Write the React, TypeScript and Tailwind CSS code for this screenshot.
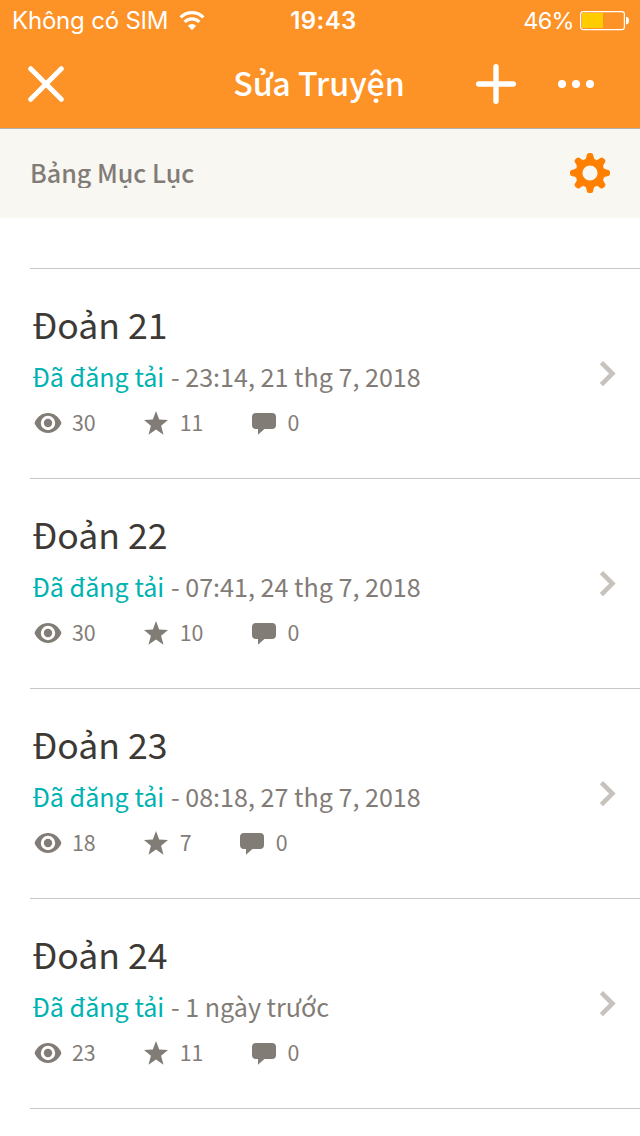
import React from 'react';

interface Chapter {
  title: string;
  date: string;
  views: number;
  votes: number;
  comments: number;
}

const chapters: Chapter[] = [
  { title: 'Đoản 21', date: '23:14, 21 thg 7, 2018', views: 30, votes: 11, comments: 0 },
  { title: 'Đoản 22', date: '07:41, 24 thg 7, 2018', views: 30, votes: 10, comments: 0 },
  { title: 'Đoản 23', date: '08:18, 27 thg 7, 2018', views: 18, votes: 7, comments: 0 },
  { title: 'Đoản 24', date: '1 ngày trước', views: 23, votes: 11, comments: 0 },
];

const WifiIcon = () => (
  <svg width="26" height="20" viewBox="0 0 26 20" fill="none" stroke="white" strokeWidth="3.2">
    <path d="M1.6 6.4a16.2 16.2 0 0 1 22.8 0" />
    <path d="M5.6 10.9a10.4 10.4 0 0 1 14.8 0" />
    <path d="M13 19.2l-4.1-4.4a5.8 5.8 0 0 1 8.2 0z" fill="white" stroke="none" />
  </svg>
);

const BatteryIcon = () => (
  <svg width="49" height="20" viewBox="0 0 49 20">
    <rect x="0.6" y="0.6" width="43.8" height="18" rx="2.6" fill="none" stroke="white" strokeWidth="1.2" />
    <rect x="2" y="2" width="21" height="15" rx="0.8" fill="#ffcc00" />
    <path d="M46 6h0.6a2.4 3.6 0 0 1 0 7.2H46z" fill="white" />
  </svg>
);

const CloseIcon = () => (
  <svg width="36" height="36" viewBox="0 0 36 36" stroke="white" strokeWidth="5" strokeLinecap="round">
    <path d="M2.7 2.7l30.6 30.6M33.3 2.7L2.7 33.3" />
  </svg>
);

const PlusIcon = () => (
  <svg width="40" height="40" viewBox="0 0 40 40" stroke="white" strokeWidth="5.4" strokeLinecap="round">
    <path d="M20 2.7v34.6M2.7 20h34.6" />
  </svg>
);

const MoreIcon = () => (
  <svg width="36" height="8" viewBox="0 0 36 8" fill="white">
    <circle cx="4" cy="4" r="4" />
    <circle cx="18" cy="4" r="4" />
    <circle cx="32" cy="4" r="4" />
  </svg>
);

const GearIcon = () => (
  <svg width="40" height="40" viewBox="-20 -20 40 40">
    {[0, 45, 90, 135, 180, 225, 270, 315].map((angle) => (
      <path
        key={angle}
        d="M-5 -13.6Q-3.6 -14.4 -3.3 -17.4Q-3.1 -20 -1 -20H1Q3.1 -20 3.3 -17.4Q3.6 -14.4 5 -13.6z"
        fill="#ff8000"
        transform={`rotate(${angle})`}
      />
    ))}
    <circle r="11.1" fill="none" stroke="#ff8000" strokeWidth="7" />
  </svg>
);

const EyeIcon = () => (
  <svg width="28" height="22" viewBox="0 0 28 22">
    <path
      fillRule="evenodd"
      fill="#827c77"
      d="M14 1C7.8 1 3 5.2 0.8 10.2a2 2 0 0 0 0 1.6C3 16.8 7.8 21 14 21s11-4.2 13.2-9.2a2 2 0 0 0 0-1.6C25 5.2 20.2 1 14 1zM14 3.8a7.2 7.2 0 1 1 0 14.4a7.2 7.2 0 0 1 0-14.4z"
    />
    <circle cx="14" cy="11" r="4.2" fill="#827c77" />
  </svg>
);

const StarIcon = () => (
  <svg width="24" height="24" viewBox="0 0 24 24" fill="#827c77">
    <path d="M12 0l3.2 8.6 8.8.5-6.9 5.6 2.4 9L12 18.6 4.5 23.7l2.4-9L0 9.1l8.8-.5z" />
  </svg>
);

const CommentIcon = () => (
  <svg width="24" height="22" viewBox="0 0 24 22" fill="#827c77">
    <path d="M4 0h16a4 4 0 0 1 4 4v8a4 4 0 0 1-4 4h-7.6L6 21.8V16H4a4 4 0 0 1-4-4V4a4 4 0 0 1 4-4z" />
  </svg>
);

const ChevronIcon = () => (
  <svg width="18" height="26" viewBox="0 0 18 26" fill="none" stroke="#c8c2bd" strokeWidth="4.6">
    <path d="M2.4 1.6l11 11-11 11" />
  </svg>
);

const ChapterRow: React.FC<{ chapter: Chapter }> = ({ chapter }) => (
  <li className="ml-[30px] flex h-[210px] items-center justify-between border-b border-[#c8c7cc] pr-[23px] pl-0.5">
    <div className="flex flex-col">
      <h2 className="h-[52px] text-[35.6px] leading-[44px] text-[#3d3934]">{chapter.title}</h2>
      <p className="h-[44px] text-[25.1px] leading-[44px] whitespace-nowrap text-[#827c77]">
        <span className="mr-px text-[#00b2b2]">Đã đăng tải</span> - {chapter.date}
      </p>
      <div className="flex h-[48px] items-center pt-0.5 pl-0.5 text-[21.4px] text-[#827c77]">
        <EyeIcon />
        <span className="ml-[10px] pb-0.5 leading-[42px]">{chapter.views}</span>
        <span className="ml-12"><StarIcon /></span>
        <span className="ml-3 pb-0.5 leading-[42px]">{chapter.votes}</span>
        <span className="ml-12 pt-0.5"><CommentIcon /></span>
        <span className="ml-3 pb-0.5 leading-[42px]">{chapter.comments}</span>
      </div>
    </div>
    <ChevronIcon />
  </li>
);

export default function App() {
  return (
    <div className="h-[1136px] w-[640px] overflow-hidden bg-white font-['Noto_Sans_CJK_SC','Noto_Sans_CJK_JP',sans-serif]">
      <header className="h-[129px] border-b border-[#b3b2ab] bg-[#fd9226] text-white">
        <div className="grid h-10 grid-cols-[1fr_auto_1fr] items-center pt-0.5 pr-[11px] pl-3 font-[Inter,sans-serif] text-[24px]">
          <div className="flex items-center gap-[11px] whitespace-nowrap">
            <span className="tracking-[-0.2px]">Không có SIM</span>
            <WifiIcon />
          </div>
          <div className="pl-1.5 text-center font-semibold tracking-[0.4px]">19:43</div>
          <div className="flex items-center justify-end gap-1.5">
            <span className="text-[23.5px] tracking-[-0.7px]">46%</span>
            <BatteryIcon />
          </div>
        </div>
        <div className="grid h-[88px] grid-cols-[206px_1fr_206px] items-center">
          <div className="pl-7"><CloseIcon /></div>
          <h1 className="pr-0.5 pb-1 text-center text-[32.2px] leading-[44px] font-medium whitespace-nowrap">Sửa Truyện</h1>
          <div className="flex items-center justify-end gap-[42px] pr-[46px]">
            <PlusIcon />
            <MoreIcon />
          </div>
        </div>
      </header>

      <section className="flex h-[89px] items-center justify-between bg-[#f8f7f2] px-[30px] pb-[2px]">
        <h3 className="h-[30px] overflow-hidden text-[25.1px] leading-[28px] font-medium text-[#827c77]">Bảng Mục Lục</h3>
        <GearIcon />
      </section>

      <ul>
        <li className="ml-[30px] h-[51px] border-b border-[#c8c7cc]" />
        {chapters.map((chapter) => (
          <ChapterRow key={chapter.title} chapter={chapter} />
        ))}
      </ul>
    </div>
  );
}
